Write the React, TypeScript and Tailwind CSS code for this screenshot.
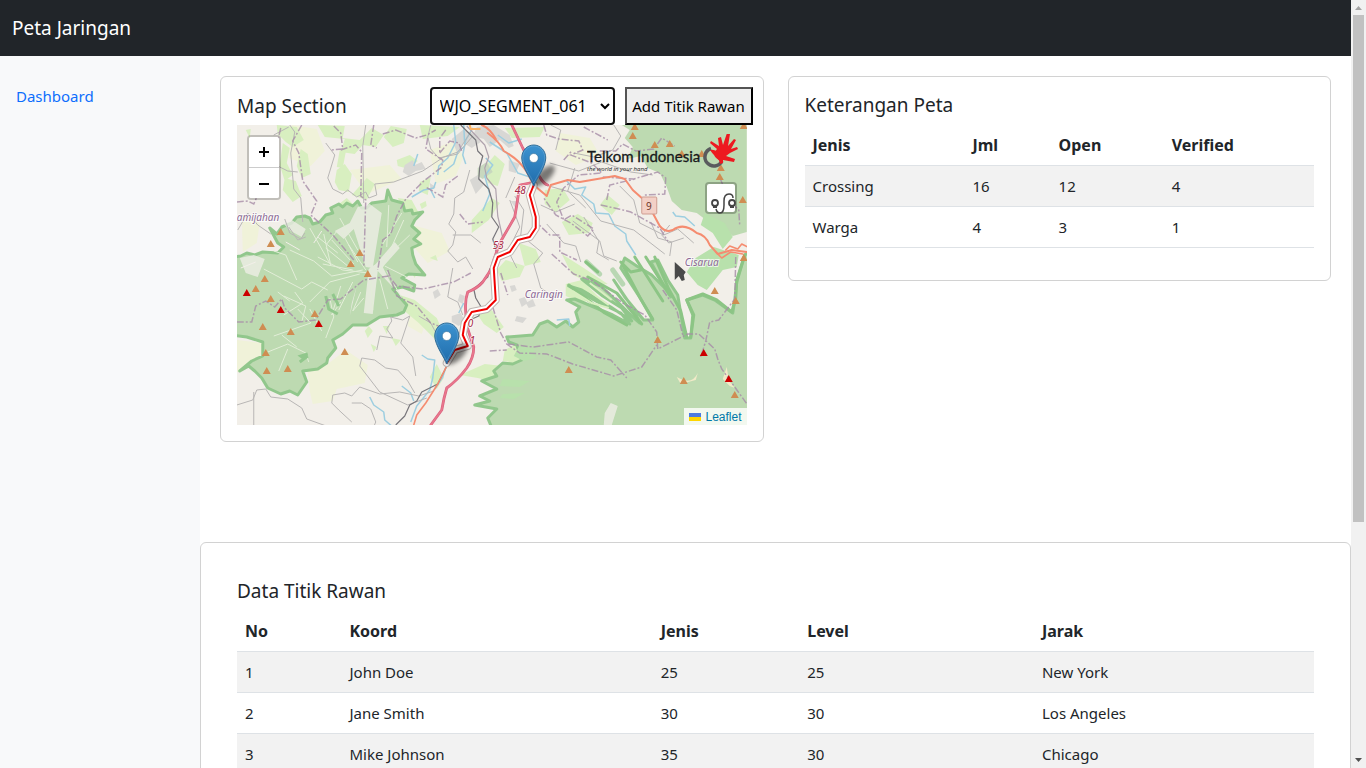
import React from "react";

type Point = [number, number];

const orangePeaks: Point[] = [
  [281, 232], [271, 244], [360, 253], [351, 264], [368, 274], [265, 279], [256, 289], [271, 299],
  [315, 314], [263, 327], [291, 332], [345, 352], [266, 353], [267, 371], [288, 369], [635, 127],
  [633, 136], [655, 145], [670, 144], [682, 154], [702, 154], [721, 168], [720, 177], [744, 126],
  [743, 200], [744, 258], [715, 291], [736, 301], [658, 340], [569, 370], [684, 381], [735, 395],
];

const redPeaks: Point[] = [[247, 293], [281, 310], [319, 324], [704, 353], [729, 379]];

const peak = ([x, y]: Point) => `M${x - 4} ${y + 3}L${x} ${y - 4}L${x + 4} ${y + 3}Z`;

const motorway =
  "M512 125L523 148L532 165L540 177Q544 184 548 185M530 183L520 185L517 205L515 217L500 243L494 260L491 270L483 282Q478 288 468 292Q465 300 466 312L467 326L474 347Q474 358 467 368Q458 380 447 388Q444 398 442 410L431 425";

const route =
  "M534 185L530 195L536 217V228L530 237L518 240L510 252L498 257L494 268L496 300L487 309L472 312L465 323L463 335L468 346L455 350L447 363";

function Pin({ x, y }: { x: number; y: number }) {
  return (
    <g transform={`translate(${x} ${y})`}>
      <ellipse cx="10" cy="-10" rx="14" ry="6" transform="rotate(-43 10 -10)" fill="#000" opacity="0.5" filter="url(#pin-shadow)" />
      <path
        d="M0 0C-2 -6 -12 -19 -12 -28C-12 -35.500 -6.500 -41 0 -41S12 -35.500 12 -28C12 -19 2 -6 0 0Z"
        fill="url(#pin-fill)"
        stroke="#2e6c97"
      />
      <path d="M0 -3C-2 -8 -11 -20 -11 -28C-11 -35 -6 -40 0 -40S11 -35 11 -28C11 -20 2 -8 0 -3Z" fill="none" stroke="#fff" strokeOpacity="0.15" />
      <circle cx="0" cy="-28" r="4.500" fill="#fff" stroke="#2e6c97" strokeOpacity="0.6" />
    </g>
  );
}

function MapCanvas() {
  return (
    <svg viewBox="237 125 510 300" preserveAspectRatio="xMidYMid slice" className="block h-full w-full bg-[#f2efe9]" role="img" aria-label="Peta segmen">
      <defs>
        <linearGradient id="pin-fill" x1="0" y1="0" x2="0" y2="1">
          <stop offset="0" stopColor="#3d93d0" />
          <stop offset="1" stopColor="#1f6cab" />
        </linearGradient>
        <filter id="pin-shadow" x="-50%" y="-100%" width="200%" height="300%">
          <feGaussianBlur stdDeviation="2" />
        </filter>
      </defs>

      {/* farmland and scrub */}
      <g fill="#f0f2d9">
        <path d="M292 125l25 4 8 22-14 15-22-8zM430 150l22-8 12 14-8 20-20 8zM242 215l18 8-3 20-14 9zM308 372l20-8 18-14 22 15-3 18-28 6-4 12-20 3-3-13zM237 340l26 3-2 13-20 16-4 0zM350 170l40-5 12 14-35 15zM412 225l30 8 8 18-22 12-16-18zM560 133l30 5 10 17-24 10-20-14zM410 310l18 6-6 18-14-8z" />
      </g>
      <g fill="#d8efc0">
        <path d="M277 125l20 2 7 13-11 7-7-5-8-8zM318 125l27 1-2 12 17 2 12-12 12 7-8 12-13-2-8 9-14-2 4-13-20-2zM254 150l9-3 3 24-8 2zM283 143l7 5-3 15 6 12-8 6-5-16zM301 149l7 5 3 20-9 4-5-12zM285 178l11 3 6 15-9 6-10-12zM337 170l8-6 7 10-3 18-10-2-4-8zM352 195l15-17 8 6-8 16zM391 126l16 3-3 14-11 4-9-10zM420 125l40 2-12 9-25 3zM397 160l13-5 8 6-9 8-11-3zM472 220l20-22 8 5-11 17-17 13zM485 167l10-12 10 9-7 22-10-3zM505 128l40-1-5 10-28 1zM545 190l18-2 7 12-14 12-11-8zM562 222l16-8 15 9-4 10-20 2zM519 243l17 6 5 13-16 4zM400 295l15 5 22 18 8 18-8 5-18-18-19-16zM437 364l7 14-7 11-7-12zM460 375l25-11 18 2 14-10-2 16-20 10-17-4zM497 270l9-10 19 6-5 11-18 4zM478 315l14-5 12 17-7 6-13-9zM562 254l22 14 24 16-14 2-22-12zM608 195l12 10-8 10-12-10zM398 198l14 2 7 13-13 2zM338 205l9-7 8 8-10 14zM420 182l11-5-3 18-9-4zM505 350l25-13 10 11-24 15-13-2zM566 284l16-4 20 20-22 2-14 -6z" />
        <path d="M369 326l4 5-5 7-3-7zM383 326h7l-3 8zM392 338l9 2-5 6zM371 344l6 3-3 5zM420 204l6-3 1 5-5 3zM246 130l5-1-1 9zM410 270l7 2-2 6zM430 258l6-3 2 6zM340 150l-3 17 6 1 3-16z" />
      </g>
      <g fill="#d8d7d4">
        <path d="M405 165l8-5 2 5 7-3 4 7-10 2-7 5-6-4zM452 139l11-9 12 4 6 8-9 6-8-5-7 9zM477 127l17-2 16 10 4 11-5 2-9-8-10 7-6-8-11-3zM509 160l11 4-4 9-7-2zM470 180l8-5 6 10-8 9zM430 183l6 4-5 4zM511 201h6l-2 6zM433 292l5-3 3 6-6 4zM460 294l5 2-2 8-5-3zM517 316l10 2-4 5-8-2zM452 316l9-3 4 8-6 5-7-4zM510 286l5-1 2 5-5 2zM519 299l6-2 3 6-6 4zM526 303l7-4 3 7-7 2z" />
      </g>
      <path d="M478 168l9-6 6 10-10 7-5-3z" fill="#c8d8bf" />

      {/* forest reserves */}
      <g fill="#bddab1" stroke="#91c78c" strokeWidth="3" strokeLinejoin="round">
        <path d="M232 257L241 256L247 253L255 255L263 252L278 253L284 247L278 243L270 228L277 234L282 227L292 223L297 217L305 216L310 218L313 224L320 222L326 215L333 213L331 208L339 204L343 207L347 203L353 206L358 201L362 208L367 208L372 203L386 201L388 190L392 200L403 203L405 211L412 210L413 214L423 212L415 220L412 226L420 233L414 239L421 244L412 248L413 255L416 264L425 275L409 274L402 278L415 285L414 291L403 287L393 289L400 297L407 305L404 312L397 315L380 317L367 325L353 325L343 334L333 340L336 348L328 358L327 363L318 369L303 371L307 382L298 395L290 391L281 394L268 388L262 378L255 371L249 366L240 371L252 361L263 356L263 342L247 337L232 335Z" />
        <path d="M751 430H493L488 418L497 409L475 405L490 401L480 396L497 389L482 381L497 376L494 371L503 363L513 364L522 360L517 345L509 342L507 337L533 335L540 324L548 321L557 327L566 321L573 327L579 322L576 312L580 307L567 300L575 299L613 315L630 324L621 313L598 302L569 286L582 290L611 307L632 321L622 308L603 296L582 279L601 286L618 302L632 316L640 323L633 308L614 280L625 297L644 320L653 320L641 299L621 268L625 258L637 266L652 275L665 288L671 297L661 280L651 262L658 260L668 280L678 295L685 338H691L693 315L687 300L703 295L715 300L733 313L735 300L737 282L745 255L752 250Z" />
      </g>
      <path d="M622 125h125v107l-14 4-8-7-11 1-9-11-8-6-15-3-10-9-5-14-7-14-12-5-7-12-13 3 5-12-8-9 5-8z" fill="#bddab1" />
      <path d="M687 272l9-14 18-11 25 8-2 12-14 3-16 20-9-5zM705 213l20 10 8 14-10 12-10-16-12-8z" fill="#b8e1ac" />
      <g fill="#f2efe9">
        <path d="M358 207l12-3 12 9-9 55-7-1-12-38-10 10-9-8 15-8zM376 264l19-22 5 6-17 19 10 20-15-16-5 43-9-1 5-44zM240 258l14-3 11 4-7 18-12-4zM284 224l8-4 14 9-4 8-11-6zM352 303l5-17-7 30zM604 425l1-12 6-10 7 3-6 19z" opacity="0.75" />
        <path d="M322 231l-8 12M241 268l15-6M300 250l-14-8" stroke="#f2efe9" />
        <path d="M677 377q15 9 21-4l-2 7-15 4zM727 367l2 13 6 8-5-2-7-7z" fill="#f1eac8" />
      </g>
      <g fill="none" stroke="#e3eed8" strokeWidth="1">
        <path d="M264 269l38 20 10-7 16 8M290 250l24 11 18 15 31-6M297 280l-11-25-12-4M310 302l20-20 30-8M326 338l8-21-4-19M284 315l19-12-8-11M274 336l37-13-13-14M268 352l20-8 18 9 3 9M279 371l9-22M318 257l25 13 26 3M349 245l17 25M318 237l20 16M353 282l-14 28M371 280l2 30M380 279l8 30M387 271l15 27M385 266l22 11M340 218l18 32M402 213l-19 31M410 235l-25 24M338 230l-11 14M302 322l4-16-22-10" />
        <path d="M341 286l-9 29 9-13M361 292l-8 19 11-13M404 220l-22 49M310 228l21 37-7-31M389 205l-2 42M322 331l-12-22M278 292l12 9M297 347l-15-12M326 248l22 18M332 240l22 24M323 264l30 6M342 232l16 30" />
      </g>
      <path d="M326 296l3 13 9 5M333 294l6 12M305 359l-4-3 7-2M300 362l8-6" fill="none" stroke="#91c78c" strokeWidth="3" />
      <g fill="none" stroke="#8cc585" strokeWidth="3" strokeLinecap="round" strokeLinejoin="round">
        <path d="M569 285l36 28 22 12M588 277l29 16 25 31M623 265l18 34 12 20M621 262l10 10 10-2M635 257l28 44M646 257l24 38M655 257l14 32 12 22 6 26M586 262l12 10" />
        <path d="M691 337l3-22-7-15 16-6 14 6 15 12 4-14 1-18 8-25" />
      </g>
      <g fill="none" stroke="#7fbf7d" strokeOpacity="0.5" strokeWidth="5" strokeLinecap="round">
        <path d="M587 262l13 12M613 270l10 14" />
      </g>
      <path d="M579 284l30 21M573 291l19 12 17 5M590 283l22 17" fill="none" stroke="#d9efc1" strokeWidth="2" />
      <path d="M520 345l14 4 2 9-12 3-10-5zM503 379l27 2-10 6-20-1zM503 394l22-1-11 6-14-1z" fill="#b8e1ac" />

      {/* watercourses */}
      <g fill="none" stroke="#9dcee0" strokeWidth="1.5" strokeLinejoin="round">
        <path d="M454 125l2 17-8 16-9 8-1 9M464 125l1 21-7 6-4 12-10 8M473 128l-7 12-3 15 3 9M418 154l-4 12M412 197l12-7 10-2 2-6M431 190l4 8M486 158l7 7-8 11 5 18-7 17M490 142l17 11 11 20 18 6M498 135l11 8 13-4" />
        <path d="M566 180l9 9 11-2-4 8 12 9 2 9 13 1 6 12 11 8 1 7 9 14" />
        <path d="M673 212l3 4 9 1 10 9M422 355l6 4 7 1-2 18-3 12-13 16-6 16M402 386l9 7 3 8M370 397l4 8 10 7 1 8 8 7M447 365l-4 12-8 12M464 303l-5 10M557 320l12-1 1 7" />
      </g>

      {/* minor roads and railway */}
      <g fill="none" stroke="#b8b6b5" strokeWidth="1">
        <path d="M290 125l5 7-4 21 3 36 7 9 2 24M326 143l9 12-7 23 5 11 10 5 5-4 9 7 9-5 3 6 8-3-2-11 19-2 29-11 21-14 14-5 13-20M366 125l-3 21 1 57M431 125l-3 12 3 12 8 9 19-4 15-18M470 170l-6 22-9 6-1 16-5 10 7 8-3 13-5 6 10 11 8-5 7 12M453 235h18l10 8M237 405l16-5 4-10 9-1 5 8 17 2 14 9 5 11 25 9M254 392v33M352 403h10l9 6 5 13-3 7M333 395l-1 8 7 7 13 12" />
        <path d="M360 366l2-8 13 2 11 8 12 2 10 11 7 12M360 366l20 26 28 13 19-7M377 350l3-14 13 2-6-9 5-8-1-4 12 3 7-4-9 27 12 14 3 19M333 395l12-2 7 3 8-9 20 7 20-2 19 4 15-5M238 230l10-17 10 12 13 9M278 166l10 5 10 1M515 196l9 14-3 25 22 18-9 11 7 24 15 10M541 205l15 7 19-8M547 224l17 19 12 3 5 16M574 153l20 4 19-7 8-14-7-11M550 163l29 8 23-9 29 10 22 3M546 185l34 10 21 26 33 9 31 24M573 221l27 20 4 15 13 5M510 200l10 27-8 16M515 177l-9 21M584 217l15 24-2 12 12 7M620 186l14 14 6 23 24 12 14-6 16 14M651 222l7 16 14 4-2 14" />
        <path d="M453 268l-5 29 10 5 5 13M440 340l-9-17-12-7M511 256l6 12M670 225l-8 10 7 8 15-5M556 150l5-20-10-5M575 168l-7 23 18 17M289 227l9 13 8-3M289 127l-15 8M285 219l5 14 11 6 4-6" />
      </g>
      <g fill="none" stroke="#77757a" strokeWidth="1.2" strokeLinejoin="round">
        <path d="M461 125l15 15 2 11 5 5-3 11-1 12 10 10 4 14-1 14 7 10-6 12 4 14-1 10-6 6-2 8-14 12 2 9 6 10-3 8-9 4M447 366l-9 18-16 8-5 9-7 4-5 11-9 9" />
        <path d="M467 126l18 19 4 12-4 11 2 10 9 11 2 27 5 22-3 11" stroke="#b0a3ad" />
      </g>

      {/* administrative borders */}
      <g fill="none" stroke="#a78da8" strokeWidth="1.500" strokeDasharray="7 2 2 2" opacity="0.8">
        <path d="M237 202l11-1 6 3 4-9M281 128l-4 17-7-1M302 125l-9 16 6 12 4 28 14 20-6 14 23 21 20 24M334 126l7 7 2 16-12 1M341 150l15-5 6 7-1 44 5 4-2 67M374 125l-3 20 6 3M383 134l13-4 20 8 11-3 9-5M446 130l-6 8v15M428 138l-2 11 17 11-1 7-18 14-18 18-9 17-6 18-8 6-5 30M440 153l10-12 9 2 3 8M458 176l-12 9-3 12-17-10M237 322h15l4-16 10-5 9 6 7-8 3 9 14 14 17-2 12-20 13-1 23-19 25-4 8 10 26 3 31-7 17-9M388 270l9 26 20 10 14 17 35 14" />
        <path d="M544 125l3 10 12 4 20 2 4 9-12 5 21 8 10 10-23 2-15 13-7 14 7 18 8-5 22 14-6 7-17-13-15-8-12-17M493 307l8 26 6 11 13 9 27 1 26 10 41 12 28-9 15-22M508 344l25 3 36-5 28 15 14 3 16 18M552 254l22 20 19 7 30 22 22 12 12 17 1 17 30-15 11 0 16 15 3 10 4 10 26 36 13 13M736 257l-1 42-16 21-9 2-4 19-5 16M490 351l17-1M721 180l9 21 9 9 1 16M600 151h16l7-7 13 7 18-2 8-11 13 8M603 177l31 2 24-7 8 6-1 16-20 1M607 200l3-15 25-6M601 205l18 4 12 3 29 16 8 13M663 290l14 20 6 25" />
        <path d="M533 219l17 16h10v17l17 8M584 127l24 13M564 160l8-9M501 273l7 22M460 214l8 10 15 -2" />
      </g>

      {/* motorway and trunk roads */}
      <g fill="none" strokeLinejoin="round" strokeLinecap="round">
        <path d={motorway} stroke="#d9607f" strokeWidth="2.800" />
        <path d={motorway} stroke="#e9778c" strokeWidth="1.600" />
        <path d="M488 133Q500 142 504 151Q520 160 527 172L534 185L547 196L551 185L568 180L580 182L615 176L625 179L633 190L642 198M653 213L660 226Q666 233 673 230Q684 222 697 233Q706 235 710 245L718 254L732 250L747 252" stroke="#f58c70" strokeWidth="2" />
        <path d="M716 252l6 6 9-6 12 2M726 250l4-4 8 3 4-5 8 4M447 366l-9 18-12 19-9 12-3 10" stroke="#f58c70" strokeWidth="1.600" />
        <path d="M482 125q8 3 14 14" stroke="#f58c70" strokeWidth="2" />
        <path d="M480 129l-9 0-1-4" stroke="#fbb365" strokeWidth="2" />
        <path d={route} stroke="#bfb6b2" strokeWidth="8" />
        <path d={route} stroke="#fff" strokeWidth="6" />
        <path d={route} stroke="#f00000" strokeWidth="2" />
      </g>
      <path d={orangePeaks.map(peak).join("")} fill="#cf8d52" />
      <path d={redPeaks.map(peak).join("")} fill="#cc0000" />
      <g fontFamily="Noto Sans, sans-serif" fontStyle="italic" fontSize="10" stroke="#fff" strokeWidth="2" strokeOpacity="0.7" paintOrder="stroke">
        <g fill="#8b6894">
          <text x="237" y="221">amijahan</text>
          <text x="525" y="298">Caringin</text>
          <text x="685" y="266">Cisarua</text>
        </g>
        <g fill="#a52642">
          <text x="515" y="194">48</text>
          <text x="493" y="249">53</text>
          <text x="468" y="327">0</text>
          <text x="470" y="344">1</text>
        </g>
      </g>
      <rect x="642" y="197" width="15" height="17" rx="1" fill="#f3d0c6" stroke="#cf9d91" />
      <text x="649" y="210" textAnchor="middle" fontFamily="Noto Sans, sans-serif" fontSize="10" fill="#6f3629">9</text>
      <Pin x={447} y={364} />
      <Pin x={534} y={186} />
      <path d="M675 262v18l4-4 3 5 3-1-1-5 2-3z" fill="#4a4a4a" />
    </svg>
  );
}

function TelkomLogo() {
  return (
    <svg viewBox="0 0 154 42" className="h-[42px] w-[154px]" role="img" aria-label="Telkom Indonesia">
      <text x="0" y="28" fontFamily="Lato, sans-serif" fontSize="15" fill="#17191b" stroke="#17191b" strokeWidth="0.3">Telkom</text>
      <text x="50" y="28" fontFamily="Lato, sans-serif" fontSize="15" fill="#17191b" stroke="#17191b" strokeWidth="0.3">Indonesia</text>
      <text x="0" y="37" fontFamily="Open Sans, sans-serif" fontStyle="italic" fontSize="6" fill="#17191b">the world in your hand</text>
      <path d="M124 14.500A9 9 0 1 0 135 27" fill="none" stroke="#5a5b5e" strokeWidth="3.500" />
      <path d="M123 16q5-1 8 3 4 4 3 8-5-2-7-6-2-2-4-5z" fill="#ed1920" />
      <path d="M130 15l-7-6 1-2 8 5-1-8 3-1 2 8 4-12 3 1-2 12 6-7 2 1-5 9 6-2 1 2-8 4-4 3 9 3-1 3-11-2 0 3-3 1q-1-6-6-11z" fill="#ed1920" />
    </svg>
  );
}

const summary = [
  ["Crossing", "16", "12", "4"],
  ["Warga", "4", "3", "1"],
];

const points = [
  ["1", "John Doe", "25", "25", "New York"],
  ["2", "Jane Smith", "30", "30", "Los Angeles"],
  ["3", "Mike Johnson", "35", "30", "Chicago"],
];

function DataTable({ head, rows, widths }: { head: string[]; rows: string[][]; widths: string[] }) {
  return (
    <table className="w-full border-collapse text-left">
      <thead>
        <tr className="border-b border-[#dee2e6]">
          {head.map((label, i) => (
            <th key={label} scope="col" className={`p-2 font-bold ${widths[i]}`}>{label}</th>
          ))}
        </tr>
      </thead>
      <tbody className="text-[15px] leading-6">
        {rows.map((row) => (
          <tr key={row[0]} className="border-b border-[#dee2e6] odd:bg-[#f2f2f2]">
            {row.map((cell, i) => (
              <td key={i} className="p-2">{cell}</td>
            ))}
          </tr>
        ))}
      </tbody>
    </table>
  );
}

export default function App() {
  return (
    <div className="flex h-screen overflow-hidden bg-white font-['Noto_Sans',sans-serif] text-base leading-6 text-[#212529]">
      <div className="flex min-w-0 flex-1 flex-col">
        <nav className="flex h-14 shrink-0 items-center bg-[#212529] px-3">
          <a href="#" className="text-[19px] text-white">Peta Jaringan</a>
        </nav>
        <div className="flex min-h-0 flex-1">
          <aside className="w-[200px] shrink-0 bg-[#f8f9fa] pt-5">
            <a href="#" className="block px-4 py-2 text-[15px] text-[#0d6efd]">Dashboard</a>
          </aside>
          <main className="min-w-0 flex-1 overflow-hidden">
            <div className="grid grid-cols-2 items-start gap-6 p-5">
              <section className="rounded-md border border-[#d2d2d2] pt-[10px] pb-4">
                <div className="flex items-center gap-[10px] pr-[10px] pl-4">
                  <h5 className="flex-1 text-[19px] leading-6">Map Section</h5>
                  <select aria-label="Segment" className="h-[38px] w-[185px] rounded border-2 border-[#101010] bg-white pl-1 text-black">
                    <option>WJO_SEGMENT_061</option>
                  </select>
                  <button type="button" className="h-[38px] w-32 border-2 border-black bg-[#efefef] text-[15px] whitespace-nowrap text-black [border-style:outset]">Add Titik Rawan</button>
                </div>
                <div className="relative mx-4 h-[300px] overflow-hidden">
                  <MapCanvas />
                  <div className="absolute top-[10px] left-[10px] flex flex-col overflow-hidden rounded border-2 border-black/20 bg-clip-padding">
                    <button type="button" aria-label="Zoom in" className="flex h-[31px] w-[30px] items-center justify-center border-b border-[#ccc] bg-white">
                      <svg viewBox="0 0 12 12" className="h-3 w-3" stroke="#000" strokeWidth="2"><path d="M1 6h10M6 1v10" /></svg>
                    </button>
                    <button type="button" aria-label="Zoom out" className="flex h-[30px] w-[30px] items-center justify-center bg-white">
                      <svg viewBox="0 0 12 12" className="h-3 w-3" stroke="#000" strokeWidth="2"><path d="M1 7h10" /></svg>
                    </button>
                  </div>
                  <div className="absolute top-[9px] right-[6px]"><TelkomLogo /></div>
                  <button type="button" aria-label="Route" className="absolute top-[57px] right-[10px] h-8 w-8 rounded border-2 border-black/25 bg-white bg-clip-padding">
                    <svg viewBox="0 0 28 28" className="h-7 w-7 overflow-visible" fill="none" stroke="#444" strokeWidth="1.800">
                      <circle cx="8" cy="19" r="3" />
                      <circle cx="25" cy="19" r="3" />
                      <path d="M6 23h4M23 23h4" />
                      <path d="M9 25q1 4 4 4 4 0 4-8v-4q0-7 5-7 4 0 4 4" strokeWidth="1.500" />
                    </svg>
                  </button>
                  <a href="#" className="absolute right-0 bottom-0 flex h-[17px] items-center gap-1 bg-white/80 px-[5px] font-['Liberation_Sans',sans-serif] text-xs text-[#0078a8]">
                    <span className="h-2 w-3 bg-linear-to-b from-[#4c7be1] from-50% to-[#ffd500] to-50%" />
                    Leaflet
                  </a>
                </div>
              </section>
              <section className="rounded-md border border-[#d2d2d2] px-4 pt-4 pb-8">
                <h5 className="mb-2 text-[19px] leading-6">Keterangan Peta</h5>
                <DataTable head={["Jenis", "Jml", "Open", "Verified"]} rows={summary} widths={["w-[31.4%]", "w-[16.9%]", "w-[22.2%]", "w-[29.5%]"]} />
              </section>
            </div>
            <section className="mt-20 rounded-md border border-[#d2d2d2] p-9">
              <h5 className="mb-2 text-[19px] leading-6">Data Titik Rawan</h5>
              <DataTable head={["No", "Koord", "Jenis", "Level", "Jarak"]} rows={points} widths={["w-[9.7%]", "w-[28.9%]", "w-[13.6%]", "w-[21.8%]", "w-[26%]"]} />
            </section>
          </main>
        </div>
      </div>
      <div aria-hidden="true" className="flex w-[15px] shrink-0 flex-col items-center bg-[#f1f1f1]">
        <svg viewBox="0 0 15 15" className="h-[15px] w-[15px]"><path d="M4 10h7L7.500 6z" fill="#a3a3a3" /></svg>
        <div className="h-[507px] w-[11px] bg-[#c1c1c1]" />
        <svg viewBox="0 0 15 15" className="mt-auto h-[15px] w-[15px]"><path d="M4 5h7L7.500 9z" fill="#505050" /></svg>
      </div>
    </div>
  );
}
